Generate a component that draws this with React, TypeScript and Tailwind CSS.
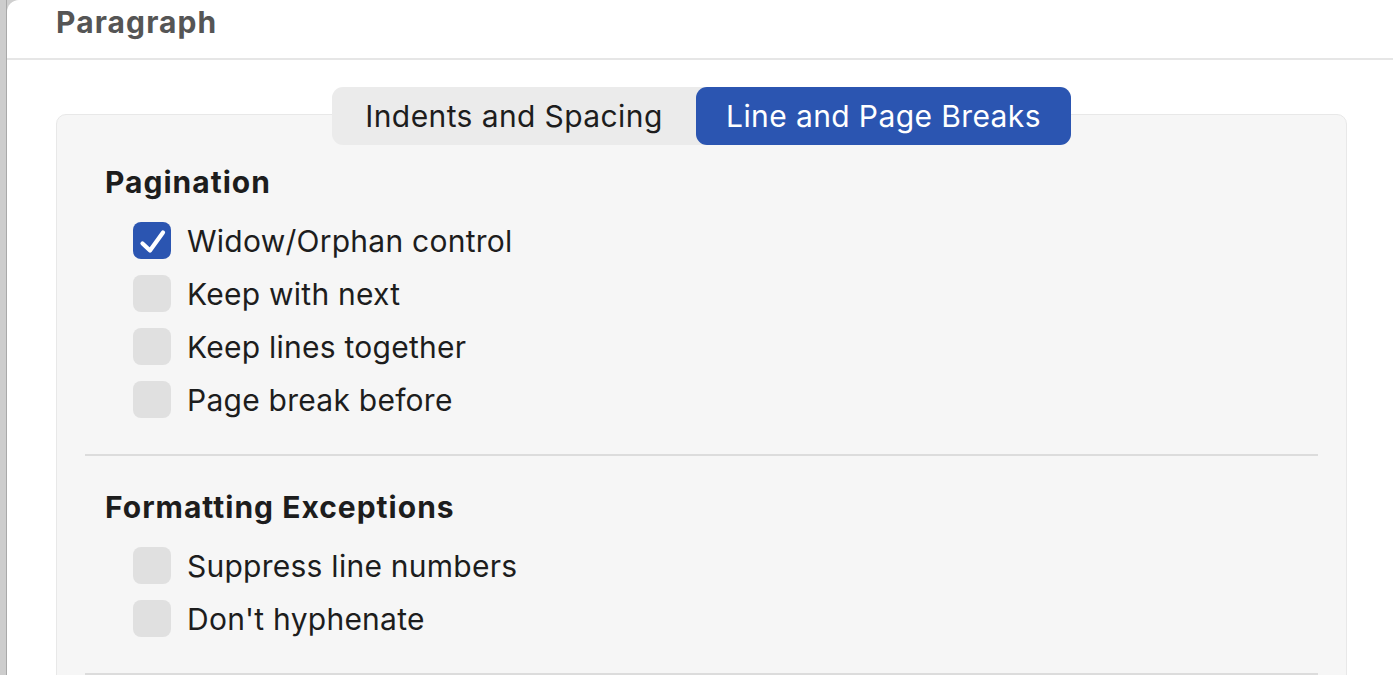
import React from "react";

function Check({ checked }: { checked?: boolean }) {
  if (checked) {
    return (
      <div className="w-[38px] h-[37px] rounded-[8px] bg-[#2b55b1] flex items-center justify-center shrink-0">
        <svg width="38" height="37" viewBox="0 0 38 37">
          <path d="M9.5 21.5 L17 28.5 L30 10.5" fill="none" stroke="white" strokeWidth="4.2" strokeLinecap="round" strokeLinejoin="round" />
        </svg>
      </div>
    );
  }
  return <div className="w-[38px] h-[37px] rounded-[8px] bg-[#e0e0e0] shrink-0" />;
}

function Row({ label, checked }: { label: string; checked?: boolean }) {
  return (
    <div className="h-[53px] flex items-center gap-[16px] pl-[28px]">
      <Check checked={checked} />
      <span className="text-[30px] tracking-[0.25px] text-[#1d1d1d] leading-none">{label}</span>
    </div>
  );
}

export default function App() {
  return (
    <div
      className="w-[1393px] h-[675px] overflow-hidden bg-[#cfcfcf] flex"
      style={{ fontFamily: "Inter, 'Noto Sans', sans-serif" }}
    >
      <div className="w-[7px] shrink-0 bg-[#cdcdcd] border-r border-[#a9a9a9]" />
      <div className="flex-1 bg-white rounded-tl-[12px] flex flex-col">
        <div className="h-[60px] shrink-0 border-b-2 border-[#e6e6e6] pl-[49px] flex items-center pb-[14px]">
          <span className="text-[30px] font-bold text-[#555555] leading-none tracking-[1.1px]">Paragraph</span>
        </div>
        <div className="pl-[49px] pt-[27px] w-[1340px] flex flex-col items-center">
          <div className="relative z-10 h-[58px] flex rounded-[11px] bg-[#ebebeb] text-[30px] tracking-[0.4px] leading-none">
            <div className="w-[364px] flex items-center justify-center text-[#1d1d1d]">Indents and Spacing</div>
            <div className="w-[375px] flex items-center justify-center rounded-[11px] bg-[#2b55b1] text-white">Line and Page Breaks</div>
          </div>
          <div className="-mt-[31px] w-[1291px] h-[600px] border border-[#e8e8e8] rounded-[10px] bg-[#f6f6f6] pt-[49px]">
            <div className="pl-[48px] h-[36px] flex items-center text-[30px] tracking-[1px] font-bold text-[#1d1d1d] leading-none">Pagination</div>
            <div className="mt-[14px] pl-[48px]">
              <Row label="Widow/Orphan control" checked />
              <Row label="Keep with next" />
              <Row label="Keep lines together" />
              <Row label="Page break before" />
            </div>
            <div className="mt-[28px] mx-[28px] h-[2px] bg-[#dcdcdc]" />
            <div className="mt-[33px] pl-[48px] h-[36px] flex items-center text-[30px] tracking-[1px] font-bold text-[#1d1d1d] leading-none">Formatting Exceptions</div>
            <div className="mt-[14px] pl-[48px]">
              <Row label="Suppress line numbers" />
              <Row label="Don't hyphenate" />
            </div>
            <div className="mt-[28px] mx-[28px] h-[2px] bg-[#dcdcdc]" />
          </div>
        </div>
      </div>
    </div>
  );
}
